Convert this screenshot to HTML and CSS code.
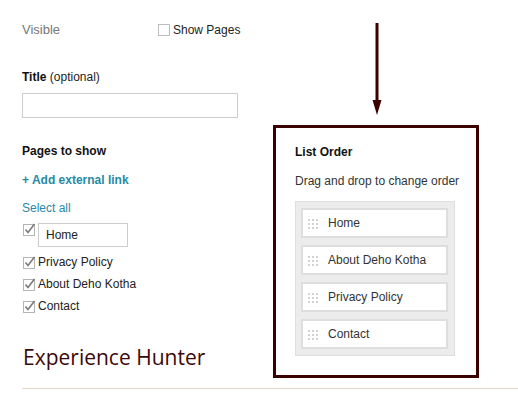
FILE: index.html
```html
<!DOCTYPE html>
<html lang="en">
<head>
    <meta charset="UTF-8">
    <title>Pages Widget</title>
    <link rel="stylesheet" href="styles.css">
</head>
<body>
    <div class="page">
        <div class="columns">
            <div class="settings">
                <div class="visible-row">
                    <span class="visible-label">Visible</span>
                    <label class="show-pages">
                        <span class="box-empty"></span>
                        Show Pages
                    </label>
                </div>

                <div class="field-label"><b>Title</b> (optional)</div>
                <div class="text-input"></div>

                <div class="section-title">Pages to show</div>
                <a class="add-link">+ Add external link</a>
                <a class="select-all">Select all</a>

                <div class="page-row home-row">
                    <svg class="check" width="13" height="13" viewBox="0 0 13 13">
                        <rect x="0.5" y="1.5" width="11" height="11" fill="#fff" stroke="#b5b5b5"/>
                        <polyline points="2.5,6.5 5,9.5 11.5,1" fill="none" stroke="#7a7a7a" stroke-width="1.6"/>
                    </svg>
                    <div class="home-input">Home</div>
                </div>
                <div class="page-row">
                    <svg class="check" width="13" height="13" viewBox="0 0 13 13">
                        <rect x="0.5" y="1.5" width="11" height="11" fill="#fff" stroke="#b5b5b5"/>
                        <polyline points="2.5,6.5 5,9.5 11.5,1" fill="none" stroke="#7a7a7a" stroke-width="1.6"/>
                    </svg>
                    Privacy Policy
                </div>
                <div class="page-row">
                    <svg class="check" width="13" height="13" viewBox="0 0 13 13">
                        <rect x="0.5" y="1.5" width="11" height="11" fill="#fff" stroke="#b5b5b5"/>
                        <polyline points="2.5,6.5 5,9.5 11.5,1" fill="none" stroke="#7a7a7a" stroke-width="1.6"/>
                    </svg>
                    About Deho Kotha
                </div>
                <div class="page-row">
                    <svg class="check" width="13" height="13" viewBox="0 0 13 13">
                        <rect x="0.5" y="1.5" width="11" height="11" fill="#fff" stroke="#b5b5b5"/>
                        <polyline points="2.5,6.5 5,9.5 11.5,1" fill="none" stroke="#7a7a7a" stroke-width="1.6"/>
                    </svg>
                    Contact
                </div>

                <h2 class="blog-title">Experience Hunter</h2>
            </div>

            <div class="order-column">
                <svg class="arrow" width="12" height="94" viewBox="0 0 12 94">
                    <line x1="6" y1="0" x2="6" y2="82" stroke="#3b0000" stroke-width="3"/>
                    <polygon points="1.5,77 10.5,77 6,92" fill="#3b0000"/>
                </svg>
                <div class="order-box">
                    <div class="section-title">List Order</div>
                    <div class="hint">Drag and drop to change order</div>
                    <ul class="order-list">
                        <li class="order-item"><span class="handle"></span>Home</li>
                        <li class="order-item"><span class="handle"></span>About Deho Kotha</li>
                        <li class="order-item"><span class="handle"></span>Privacy Policy</li>
                        <li class="order-item"><span class="handle"></span>Contact</li>
                    </ul>
                </div>
            </div>
        </div>
        <div class="divider"></div>
    </div>
</body>
</html>
```

FILE: styles.css
```css
body {
    margin: 0;
    font-family: 'Liberation Sans', Arial, sans-serif;
    font-size: 12px;
    line-height: 16px;
    color: #222;
    background: #fff;
}
.page {
    padding: 22px 0 0 22px;
}
.columns {
    display: flex;
}
.settings {
    width: 251px;
    display: flex;
    flex-direction: column;
    align-items: flex-start;
}
.visible-row {
    display: flex;
    align-items: center;
    width: 100%;
}
.visible-label {
    color: #777;
    font-size: 13px;
    width: 136px;
}
.show-pages {
    display: flex;
    align-items: center;
    color: #222;
}
.box-empty {
    width: 10px;
    height: 10px;
    border: 1px solid #bdbdbd;
    margin-right: 3px;
}
.field-label {
    margin-top: 31px;
    color: #222;
}
.field-label b {
    color: #111;
}
.text-input {
    margin-top: 8px;
    width: 214px;
    height: 23px;
    border: 1px solid #ccc;
}
.section-title {
    font-weight: bold;
    color: #111;
}
.settings .section-title {
    margin-top: 25px;
}
.add-link {
    margin-top: 13px;
    color: #268aa6;
    font-weight: bold;
}
.select-all {
    margin-top: 12px;
    color: #268aa6;
}
.page-row {
    display: flex;
    align-items: center;
    height: 22px;
    color: #222;
}
.home-row {
    margin-top: 7px;
    height: 24px;
    margin-bottom: 4px;
    align-items: flex-start;
}
.check {
    margin-right: 2px;
    margin-left: 1px;
    flex-shrink: 0;
}
.home-input {
    width: 81px;
    height: 22px;
    line-height: 22px;
    padding-left: 7px;
    border: 1px solid #ccc;
}
.blog-title {
    margin: 26px 0 0;
    padding-left: 1px;
    font-family: 'Open Sans', sans-serif;
    font-weight: normal;
    font-size: 21px;
    line-height: 28px;
    color: #3d0808;
}
.order-column {
    display: flex;
    flex-direction: column;
}
.arrow {
    display: block;
    margin: 1px 0 8px 98px;
}
.order-box {
    width: 181px;
    height: 231px;
    padding: 16px 0 0 19px;
    border: 3px solid #3b0000;
}
.hint {
    margin-top: 13px;
    color: #333;
}
.order-list {
    list-style: none;
    margin: 12px 0 0;
    padding: 6px 6px 6px 5px;
    width: 147px;
    background: #ececec;
    border: 1px solid #dedede;
    display: flex;
    flex-direction: column;
    gap: 7px;
}
.order-item {
    display: flex;
    align-items: center;
    height: 26px;
    background: #fff;
    border: 2px solid #dedede;
    color: #333;
}
.handle {
    width: 12px;
    height: 11px;
    margin: 0 9px 0 4px;
    background-image: radial-gradient(circle, #d2d2d2 1px, transparent 1.3px);
    background-size: 4px 4px;
}
.divider {
    margin-top: 10px;
    height: 1px;
    background: #e4d9c6;
}
```
